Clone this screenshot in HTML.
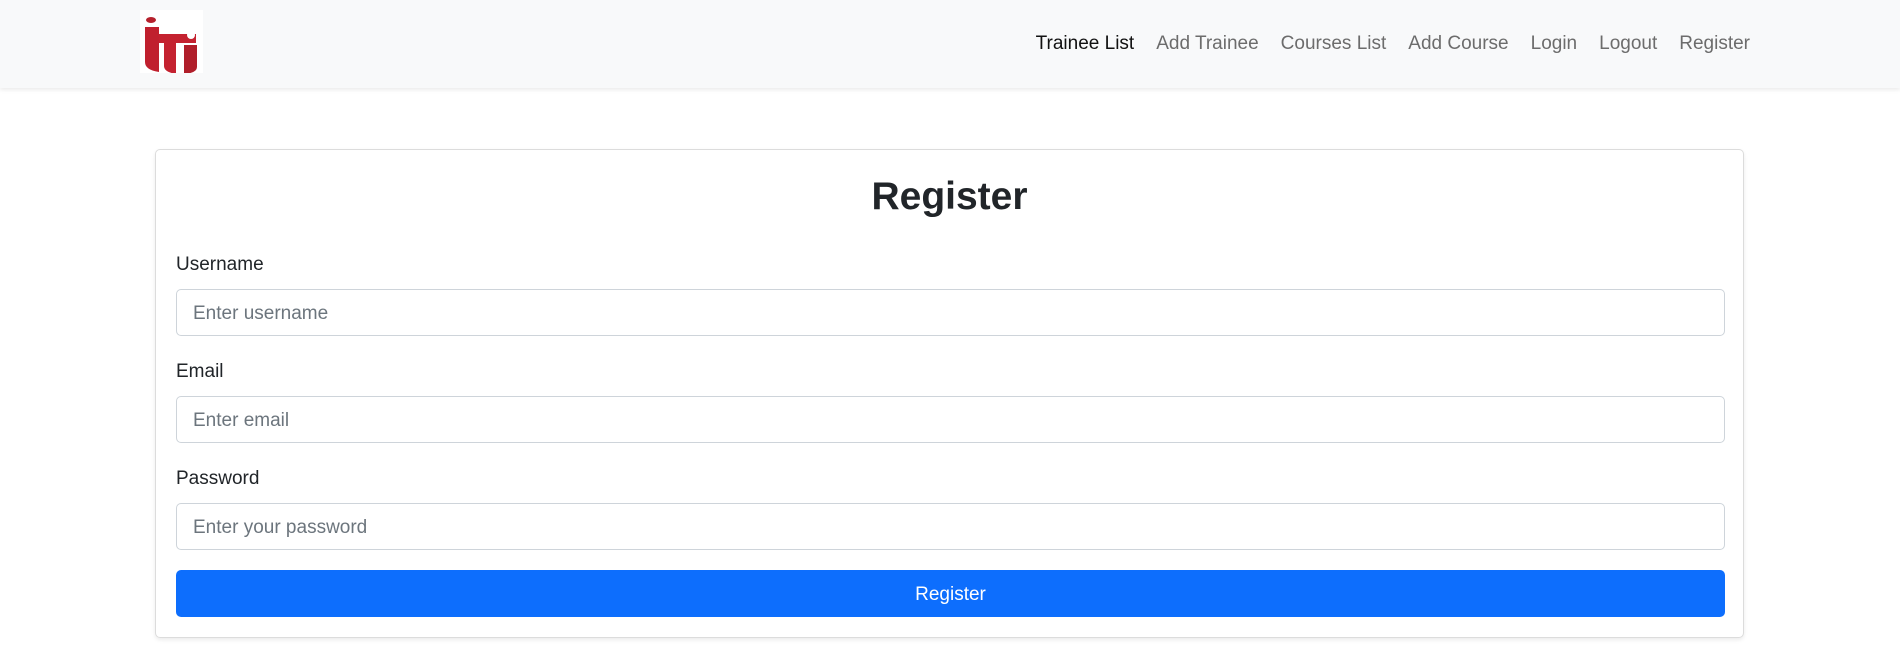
<!DOCTYPE html>
<html><head><style>
*{box-sizing:border-box;margin:0;padding:0}
body{width:1900px;height:654px;background:#fff;font-family:"Liberation Sans",sans-serif;color:#212529;position:relative;overflow:hidden}
.nav{position:absolute;left:0;top:0;width:1900px;height:88px;background:#f8f9fa;box-shadow:0 2px 4px rgba(0,0,0,.08)}
.logo{position:absolute;left:140px;top:10px;width:63px;height:63px;background:#fff}
.links{position:absolute;right:150px;top:33px;font-size:19px;display:flex;gap:22px;color:#6c6c6c}
.links span:first-child{color:#111}
.card{position:absolute;left:155px;top:149px;width:1589px;height:489px;border:1px solid #dcdcdc;border-radius:5px;box-shadow:0 2px 4px rgba(0,0,0,.08)}
h1{position:absolute;left:0;width:100%;top:25px;text-align:center;font-size:39px;font-weight:bold}
label{position:absolute;left:20px;font-size:19px}
.inp{position:absolute;left:20px;width:1549px;height:47px;border:1px solid #ced4da;border-radius:5px;padding-left:16px;line-height:47px;font-size:19px;color:#6c757d}
.btn{position:absolute;left:20px;top:420px;width:1549px;height:47px;background:#0d6efd;border-radius:5px;color:#fff;text-align:center;line-height:49px;font-size:19px}
</style></head><body>
<div class="nav">
<div class="logo"><svg width="63" height="63" viewBox="0 0 63 63">
<ellipse cx="11" cy="10" rx="5" ry="3" fill="#b5202c"/>
<path d="M5 17 L19 17 L19 62 Q5 60 5 52 Z" fill="#c0202e"/>
<path d="M19 24 L56 24 L56 33 L36 33 L36 64 Q24 62 24 56 L24 33 L19 33 Z" fill="#c42230"/>
<circle cx="51" cy="25" r="4" fill="#fff"/>
<path d="M44 35 L57 35 L57 57 Q57 63 44 64 Z" fill="#b01e2a"/>
</svg></div>
<div class="links"><span>Trainee List</span><span>Add Trainee</span><span>Courses List</span><span>Add Course</span><span>Login</span><span>Logout</span><span>Register</span></div>
</div>
<div class="card">
<h1>Register</h1>
<label style="top:104px">Username</label>
<div class="inp" style="top:139px">Enter username</div>
<label style="top:211px">Email</label>
<div class="inp" style="top:246px">Enter email</div>
<label style="top:318px">Password</label>
<div class="inp" style="top:353px">Enter your password</div>
<div class="btn">Register</div>
</div>
</body></html>
